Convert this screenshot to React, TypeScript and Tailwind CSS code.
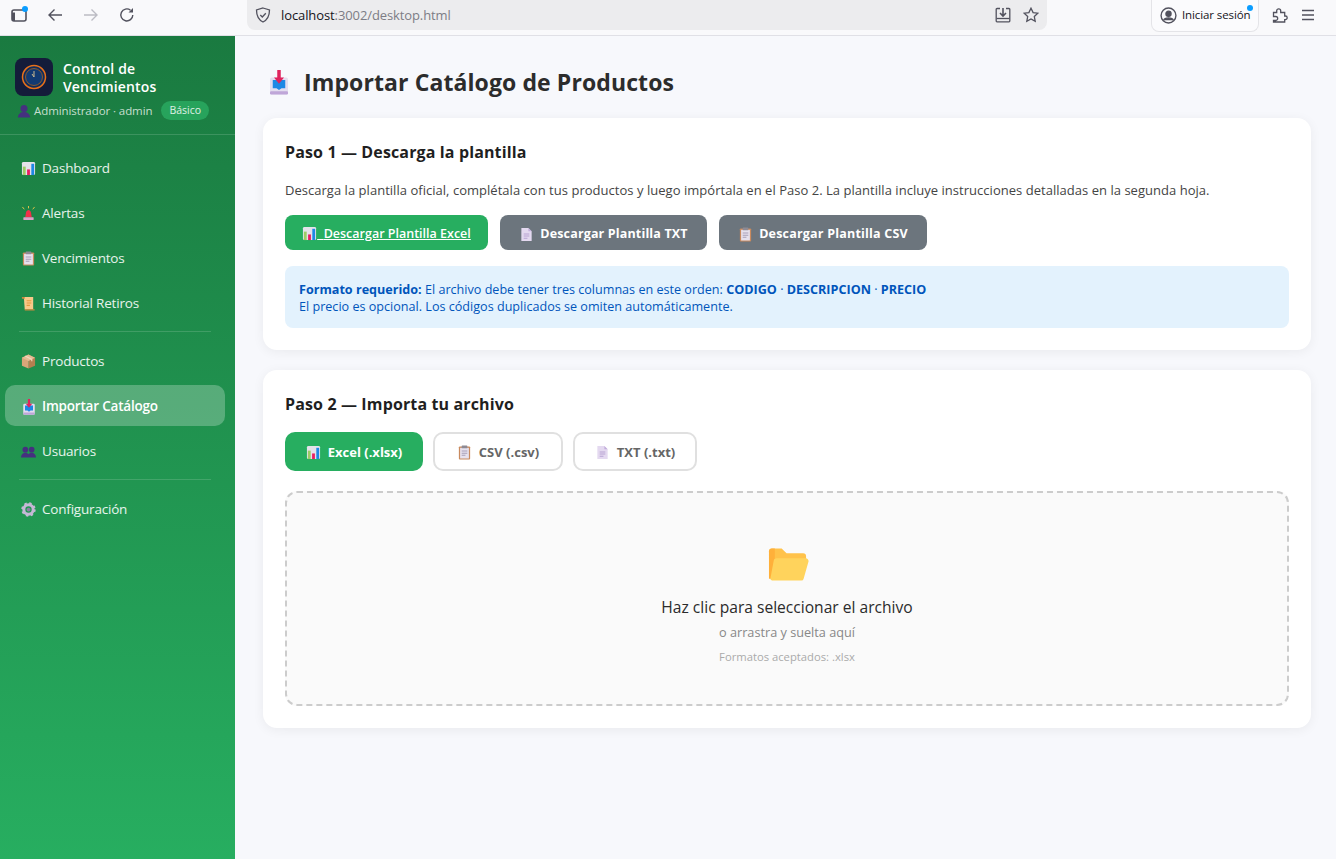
import React from "react";

const FONT = "font-['Open_Sans','Noto_Sans',sans-serif]";

function Chart({ s = 15, cls = "shrink-0" }: { s?: number; cls?: string }) {
  return (
    <svg width={s} height={s} viewBox="0 0 16 16" className={cls}>
      <rect x="1" y="1" width="14" height="14" rx="1.500" fill="#e4e2ea" />
      <rect x="2" y="6" width="3" height="9" fill="#9ccc65" />
      <rect x="6.500" y="9" width="3" height="6" fill="#e91e63" />
      <rect x="11" y="3" width="3" height="12" fill="#1e88e5" />
    </svg>
  );
}
function Siren({ s = 15 }: { s?: number }) {
  return (
    <svg width={s} height={s} viewBox="0 0 16 16" className="shrink-0">
      <path d="M1.500 1l2 2.500M8 0v2.500M14.500 1l-2 2.500" stroke="#e8c547" strokeWidth="1" fill="none" />
      <path d="M4.500 12 5.500 6Q8 2.500 10.500 6l1 6z" fill="#f0304a" />
      <rect x="2.500" y="12" width="11" height="3" rx=".5" fill="#d9a0c8" />
    </svg>
  );
}
function Clip({ s = 15 }: { s?: number }) {
  return (
    <svg width={s} height={s} viewBox="0 0 16 16" className="shrink-0">
      <rect x="2" y="1.500" width="12" height="14" rx="1" fill="#c98a5e" />
      <rect x="3.300" y="3" width="9.400" height="11.400" fill="#e6e1ee" />
      <rect x="5" y="0.500" width="6" height="3" rx=".6" fill="#8d8a94" />
      <path d="M5 6.500h6M5 8.700h6M5 11h4" stroke="#a8a0b8" strokeWidth="1.100" />
    </svg>
  );
}
function Scroll({ s = 15 }: { s?: number }) {
  return (
    <svg width={s} height={s} viewBox="0 0 16 16" className="shrink-0">
      <path d="M3 1h10v13.500H4z" fill="#f8c98a" />
      <path d="M1 1h3v2H1zM4 14h10.500v1.500H4z" fill="#c98a3e" />
      <path d="M6 5h5M6 7.500h5M6 10h3.500" stroke="#e69a3e" strokeWidth="1.200" />
    </svg>
  );
}
function Box({ s = 15 }: { s?: number }) {
  return (
    <svg width={s} height={s} viewBox="0 0 16 16" className="shrink-0">
      <path d="M8 .5 15 4v8.500L8 15.500z" fill="#b57f50" />
      <path d="M8 .5 1 4v8.500l7 3z" fill="#d9a679" />
      <path d="M1 4l7 3.500L15 4 8 .5z" fill="#e5bd95" />
      <path d="M4.500 2.200 11.500 5.800v2" stroke="#f2d9bf" strokeWidth="1.200" fill="none" />
    </svg>
  );
}
function Inbox({ w = 14, h = 16 }: { w?: number; h?: number }) {
  return (
    <svg width={w} height={h} viewBox="0 0 16 20" className="shrink-0">
      <rect x="0.800" y="6" width="14.400" height="13.600" rx="1.500" fill="#e3ddef" />
      <rect x="0.800" y="17" width="14.400" height="2.600" rx="1" fill="#bfa6d8" />
      <path d="M3 8h10v6.500h-3L8 16l-2-1.500H3z" fill="#1e88e5" />
      <path d="M6.600 0h2.800v6H12L8 11 4 6h2.600z" fill="#e0245e" />
    </svg>
  );
}
function Users({ s = 15 }: { s?: number }) {
  return (
    <svg width={s} height={s} viewBox="0 0 16 16" className="shrink-0" fill="#45307f">
      <circle cx="4.600" cy="6" r="3" />
      <circle cx="11.400" cy="6" r="3" />
      <path d="M0 14.500c0-7 9.200-7 9.200 0zM6.800 14.500c0-7 9.200-7 9.200 0z" />
    </svg>
  );
}
function Gear({ s = 15 }: { s?: number }) {
  return (
    <svg width={s} height={s} viewBox="0 0 16 16" className="shrink-0">
      <circle cx="8" cy="8" r="5" fill="none" stroke="#c5b8d6" strokeWidth="3.200" />
      <circle cx="8" cy="8" r="6.500" fill="none" stroke="#c5b8d6" strokeWidth="2.400" strokeDasharray="2.500 2.600" />
      <circle cx="8" cy="8" r="2" fill="#8d7fa5" />
    </svg>
  );
}
function Page({ s = 15 }: { s?: number }) {
  return (
    <svg width={s} height={s} viewBox="0 0 16 16" className="shrink-0">
      <path d="M2.500 1h7.500l3.500 3.500V15h-11z" fill="#e4d9f0" />
      <path d="M10 1v3.500h3.500z" fill="#c2aedb" />
      <path d="M5 7.500h6M5 9.700h6M5 12h4" stroke="#b7a3d2" strokeWidth="1.100" />
    </svg>
  );
}
function Person() {
  return (
    <svg width="14" height="14" viewBox="0 0 16 16" className="shrink-0" fill="#45307f">
      <circle cx="8" cy="5" r="4" />
      <path d="M1 15.500c0-8.500 14-8.500 14 0z" />
    </svg>
  );
}

function NavItem({ icon, label, active }: { icon: React.ReactNode; label: string; active?: boolean }) {
  return (
    <div
      className={
        "flex items-center gap-[6px] h-[41px] pl-[16px] pt-[2px] rounded-[10px] text-[13.500px] " +
        (active ? "bg-white/25 font-semibold text-white" : "text-white/90")
      }
    >
      <span className="w-[15px] flex justify-center">{icon}</span>
      <span className="tracking-[-0.2px]">{label}</span>
    </div>
  );
}

function TabBtn({ icon, label, active, w }: { icon: React.ReactNode; label: string; active?: boolean; w: string }) {
  return (
    <div
      className={
        "flex items-center justify-center gap-[7px] h-[39px] rounded-[10px] text-[13px] font-bold pt-[2px] " +
        w +
        " " +
        (active ? "bg-[#27ae60] text-white" : "bg-white border-2 border-[#e0e0e0] text-[#666666]")
      }
    >
      {icon}
      <span>{label}</span>
    </div>
  );
}

function Toolbar() {
  const stroke = "#52525e";
  return (
    <header className="flex items-center h-[36px] bg-[#f9f9fb] border-b border-[#e0e0e6] shrink-0 relative">
      <div className="relative ml-[11px] w-[16px] h-[16px] -mt-[5px]">
        <svg width="16" height="16" viewBox="0 0 16 16" fill="none">
          <rect x="1" y="3" width="14" height="11" rx="2" stroke={stroke} strokeWidth="1.600" />
          <path d="M1 5.500V13a1 1 0 0 0 1 1h2V5.500z" fill={stroke} />
        </svg>
        <span className="absolute -top-[1px] -right-[1px] w-[6px] h-[6px] rounded-full bg-[#0a9dff]" />
      </div>
      <svg className="ml-[20px] -mt-[5px]" width="16" height="16" viewBox="0 0 16 16" fill="none" stroke={stroke} strokeWidth="1.400">
        <path d="M15 8H2M7.500 2.500 2 8l5.500 5.500" />
      </svg>
      <svg className="ml-[20px] -mt-[5px]" width="16" height="16" viewBox="0 0 16 16" fill="none" stroke="#bcbcc4" strokeWidth="1.400">
        <path d="M1 8h13M8.500 2.500 14 8l-5.500 5.500" />
      </svg>
      <svg className="ml-[20px] -mt-[5px]" width="16" height="16" viewBox="0 0 16 16" fill="none" stroke={stroke} strokeWidth="1.400">
        <path d="M13.800 8A6 6 0 1 1 11.500 3.200" />
        <path d="M14 1v4.500H9.500z" fill={stroke} stroke="none" />
      </svg>
      <div className="ml-[112px] flex items-center w-[800px] h-[31px] -mt-[6px] rounded-b-[8px] bg-[#ececee]">
        <svg className="ml-[8px]" width="16" height="16" viewBox="0 0 16 16" fill="none" stroke={stroke} strokeWidth="1.300">
          <path d="M8 1 14.500 3c0 6-1.500 9.500-6.500 12C3 12.500 1.500 9 1.500 3z" />
          <path d="M5.300 8 7.300 10l3.500-3.800" />
        </svg>
        <span className="ml-[10px] pt-[2px] text-[13px] text-[#15141a] tracking-[-0.1px]">
          localhost<span className="text-[#7d7d85]">:3002/desktop.html</span>
        </span>
        <div className="ml-auto flex items-center gap-[12px] mr-[8px]">
          <svg width="16" height="16" viewBox="0 0 16 16" fill="none" stroke={stroke} strokeWidth="1.300">
            <path d="M5 1.500H2a.8.800 0 0 0-.8.800V14a.8.800 0 0 0 .8.800h12a.8.800 0 0 0 .8-.8V2.300a.8.800 0 0 0-.8-.8h-3" />
            <path d="M1.500 11.500h13" />
            <path d="M8 1v7M5 6l3 3 3-3" strokeWidth="1.600" />
          </svg>
          <svg width="16" height="16" viewBox="0 0 16 16" fill="none" stroke={stroke} strokeWidth="1.300">
            <path d="M8 1.200l2.100 4.400 4.700.6-3.500 3.300.9 4.800L8 12l-4.200 2.300.9-4.800L1.200 6.200l4.700-.6z" />
          </svg>
        </div>
      </div>
      <div className="ml-[104px] relative flex items-center h-[32px] w-[108px] -mt-[4px] rounded-b-[8px] border border-t-0 border-[#e4e4e8] bg-[#fbfbfd]">
        <svg className="ml-[8px]" width="17" height="17" viewBox="0 0 16 16" fill="none" stroke={stroke} strokeWidth="1.300">
          <circle cx="8" cy="8" r="7" />
          <circle cx="8" cy="6.300" r="2.400" fill={stroke} />
          <path d="M3.500 12.500c1-3 8-3 9 0" fill={stroke} />
        </svg>
        <span className="ml-[5px] text-[11.500px] text-[#15141a] tracking-[-0.1px] whitespace-nowrap">Iniciar sesión</span>
        <span className="absolute top-[5px] right-[5px] w-[6px] h-[6px] rounded-full bg-[#0a9dff]" />
      </div>
      <svg className="ml-[13px] -mt-[5px]" width="16" height="16" viewBox="0 0 16 16" fill="none" stroke={stroke} strokeWidth="1.300">
        <path d="M1.500 5.500h3.200V3.800a2 2 0 0 1 4 0v1.700h4v3.500h.7a1.800 1.800 0 0 1 0 3.600h-.7V15H1.500v-1.500h2.200a2 2 0 0 0 0-4H1.500z" />
      </svg>
      <svg className="ml-[12px] -mt-[5px]" width="16" height="16" viewBox="0 0 16 16" fill="none" stroke={stroke} strokeWidth="1.400">
        <path d="M2 3.500h12M2 8h12M2 12.500h12" />
      </svg>
    </header>
  );
}

function Sidebar() {
  return (
    <aside className="w-[235px] shrink-0 flex flex-col bg-gradient-to-b from-[#1a7a40] to-[#27ae60] text-white">
      <div className="h-[99px] pl-[15px] pr-[16px] pt-[22px] border-b border-white/15">
        <div className="flex items-center gap-[10px]">
          <div className="w-[38px] h-[38px] rounded-[8px] bg-[#141c3a] flex items-center justify-center shrink-0">
            <svg width="26" height="26" viewBox="0 0 26 26">
              <circle cx="13" cy="13" r="11.500" fill="#0f2c5c" stroke="#e8701a" strokeWidth="1.500" />
              <circle cx="13" cy="13" r="8.500" fill="#123a72" stroke="#8a5a30" strokeWidth="1" />
              <path d="M13 13V7M13 13l-2-3" stroke="#c8b890" strokeWidth="1" />
            </svg>
          </div>
          <div className="text-[14px] leading-[18px] font-semibold tracking-[0.15px] pt-[2px]">
            Control de
            <br />
            Vencimientos
          </div>
        </div>
        <div className="flex items-center mt-[5px] ml-[2px] text-[11.500px] text-white/75">
          <Person />
          <span className="ml-[3px] tracking-[-0.08px] whitespace-nowrap">Administrador · admin</span>
          <span className="ml-[9px] h-[19px] px-[8px] rounded-full bg-[#27a35c] flex items-center text-[10.500px] text-white/85">
            Básico
          </span>
        </div>
      </div>
      <nav className="flex flex-col gap-[4px] pt-[12px] pl-[5px] pr-[10px]">
        <NavItem icon={<Chart />} label="Dashboard" />
        <NavItem icon={<Siren />} label="Alertas" />
        <NavItem icon={<Clip />} label="Vencimientos" />
        <NavItem icon={<Scroll />} label="Historial Retiros" />
        <div className="h-px bg-white/15 mx-[14px] my-[4px]" />
        <NavItem icon={<Box />} label="Productos" />
        <NavItem icon={<Inbox />} label="Importar Catálogo" active />
        <NavItem icon={<Users />} label="Usuarios" />
        <div className="h-px bg-white/15 mx-[14px] my-[4px]" />
        <NavItem icon={<Gear />} label="Configuración" />
      </nav>
    </aside>
  );
}

export default function App() {
  return (
    <div className={"w-[1336px] h-[859px] overflow-hidden flex flex-col bg-[#f7f8fc] " + FONT}>
      <Toolbar />
      <div className="flex flex-1 min-h-0">
        <Sidebar />
        <main className="flex-1 pt-[30px] pl-[28px] pr-[25px]">
          <h1 className="flex items-center h-[32px] pl-[6px] gap-[15px] text-[23px] font-bold text-[#2c2c2c] tracking-[0.1px] mb-[20px]">
            <Inbox w={20} h={25} />
            Importar Catálogo de Productos
          </h1>

          <section className="h-[232px] bg-white rounded-[14px] shadow-[0_2px_12px_rgba(0,0,0,0.06)] px-[22px] pt-[22px] mb-[20px]">
            <h2 className="text-[16px] leading-[24px] font-bold text-[#1f1f1f] tracking-[0.13px]">Paso 1 — Descarga la plantilla</h2>
            <p className="mt-[16px] text-[13px] leading-[20px] text-[#444444] tracking-[0.03px] whitespace-nowrap">
              Descarga la plantilla oficial, complétala con tus productos y luego impórtala en el Paso 2. La plantilla incluye instrucciones detalladas en la segunda hoja.
            </p>
            <div className="flex gap-[12px] mt-[15px]">
              <div className="flex items-center justify-center w-[203px] h-[35px] pt-[3px] rounded-[8px] bg-[#27ae60] text-white text-[12.500px] font-semibold">
                <span className="underline whitespace-pre">
                  <Chart cls="inline align-[-3px]" />{"  "}Descargar Plantilla Excel
                </span>
              </div>
              <div className="flex items-center justify-center gap-[6px] w-[207px] h-[35px] pt-[3px] rounded-[8px] bg-[#6c757d] text-white text-[12.500px] font-bold tracking-[0.15px]">
                <Page /> Descargar Plantilla TXT
              </div>
              <div className="flex items-center justify-center gap-[6px] w-[208px] h-[35px] pt-[3px] rounded-[8px] bg-[#6c757d] text-white text-[12.500px] font-bold tracking-[0.2px]">
                <Clip /> Descargar Plantilla CSV
              </div>
            </div>
            <div className="mt-[16px] h-[62px] rounded-[8px] bg-[#e3f2fd] px-[14px] pt-[15px] text-[12.600px] leading-[17px] text-[#0055bb] whitespace-nowrap">
              <div>
                <strong>Formato requerido:</strong> El archivo debe tener tres columnas en este orden: <strong>CODIGO</strong> · <strong>DESCRIPCION</strong> · <strong>PRECIO</strong>
              </div>
              <div>El precio es opcional. Los códigos duplicados se omiten automáticamente.</div>
            </div>
          </section>

          <section className="h-[358px] bg-white rounded-[14px] shadow-[0_2px_12px_rgba(0,0,0,0.06)] px-[22px] pt-[22px]">
            <h2 className="text-[16px] leading-[24px] font-bold text-[#1f1f1f] tracking-[0.13px]">Paso 2 — Importa tu archivo</h2>
            <div className="flex gap-[10px] mt-[16px]">
              <TabBtn active w="w-[138px]" icon={<Chart />} label="Excel (.xlsx)" />
              <TabBtn w="w-[130px]" icon={<Clip />} label="CSV (.csv)" />
              <TabBtn w="w-[124px]" icon={<Page />} label="TXT (.txt)" />
            </div>
            <div className="mt-[20px] h-[215px] rounded-[12px] border-2 border-dashed border-[#cccccc] bg-[#fafafa] flex flex-col items-center pt-[53px]">
              <svg width="41" height="36" viewBox="0 0 42 36" className="ml-[2px]">
                <path d="M1 5a3 3 0 0 1 3-3h10l5 5h17a3 3 0 0 1 3 3v3H1v20z" fill="#ffc24a" />
                <path d="M1 5a3 3 0 0 1 3-3h3v31H1z" fill="#ffb03a" />
                <path d="M9 12h29.500a3 3 0 0 1 3 3.500L36.500 33a2.500 2.500 0 0 1-2.500 2H4.500a2 2 0 0 1-2-2.500L6 14a3 3 0 0 1 3-2z" fill="#ffd35c" />
              </svg>
              <div className="mt-[14px] text-[15.600px] leading-[22px] font-medium text-[#2b2b2b]">Haz clic para seleccionar el archivo</div>
              <div className="mt-[5px] text-[12.700px] leading-[18px] text-[#888888]">o arrastra y suelta aquí</div>
              <div className="mt-[8px] text-[11.250px] leading-[16px] text-[#aaaaaa]">Formatos aceptados: .xlsx</div>
            </div>
          </section>
        </main>
      </div>
    </div>
  );
}
